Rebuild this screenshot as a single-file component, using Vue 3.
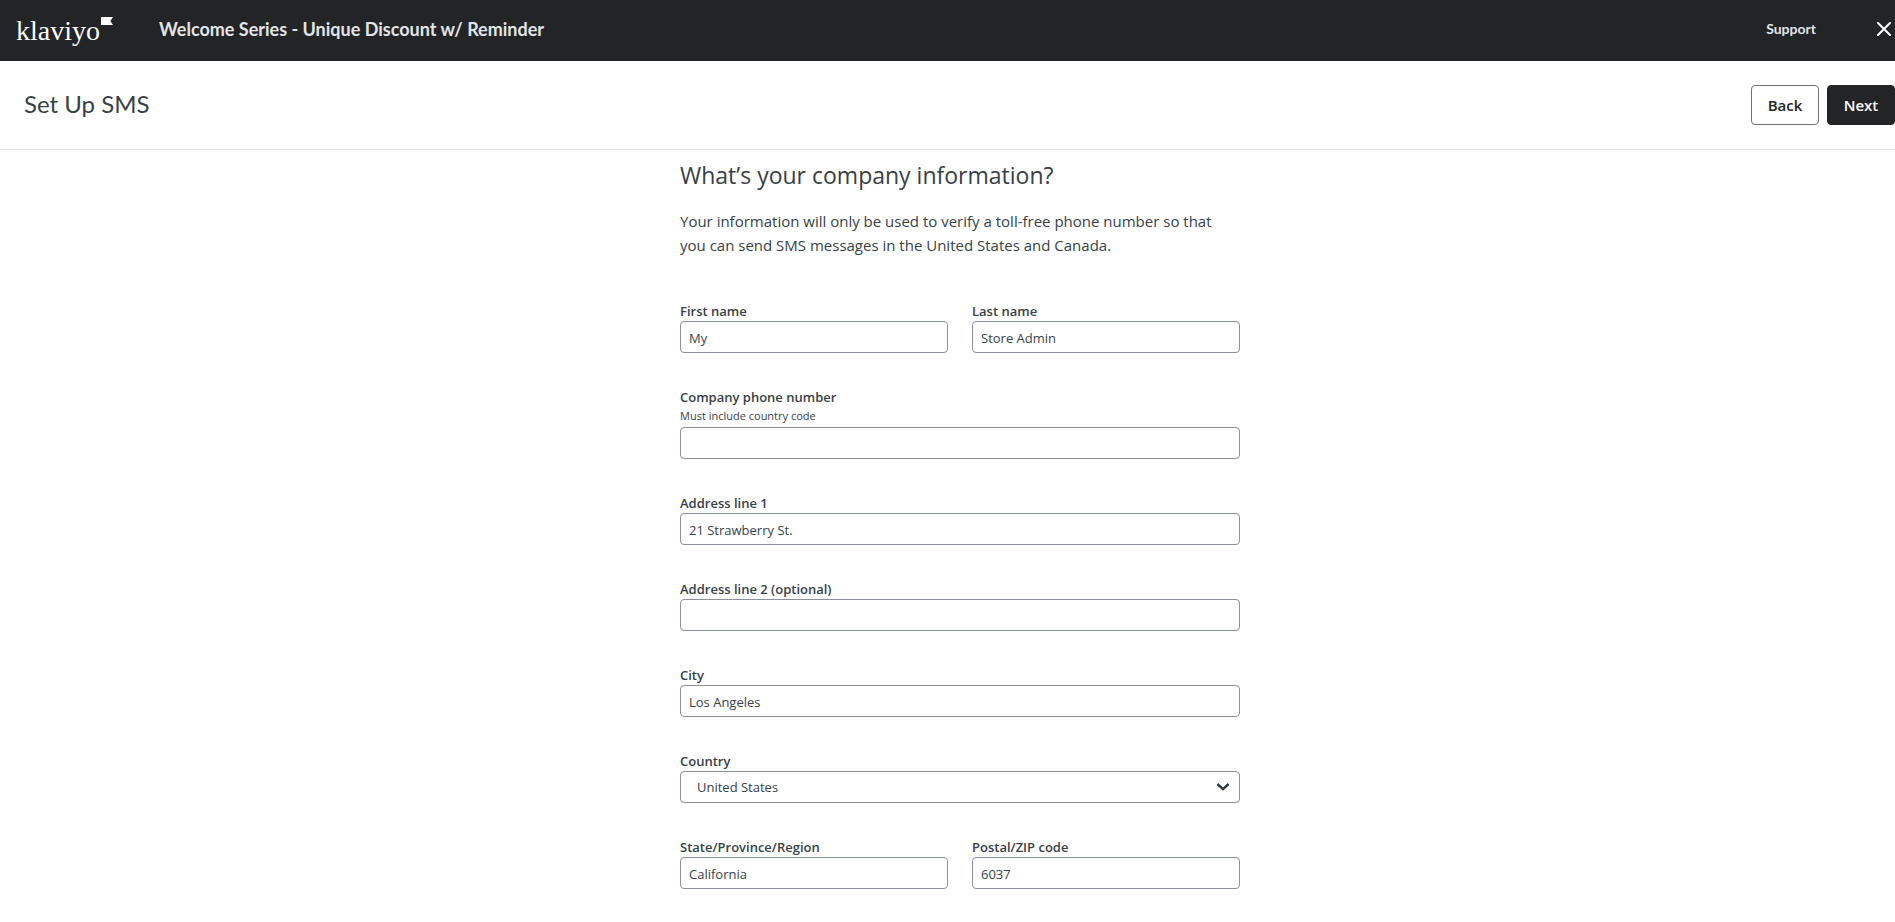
<script setup>
import { reactive } from 'vue'

const form = reactive({
  firstName: 'My',
  lastName: 'Store Admin',
  phone: '',
  address1: '21 Strawberry St.',
  address2: '',
  city: 'Los Angeles',
  country: 'United States',
  region: 'California',
  zip: '6037',
})
</script>

<template>
  <div class="page">
    <header class="topbar">
      <a class="logo" href="#" aria-label="klaviyo">
        <span class="logo-text">klaviyo</span>
        <svg class="logo-flag" viewBox="0 0 12 8" width="12" height="8" aria-hidden="true">
          <path d="M0 0H12L9.4 4L12 8H0Z" fill="#fff" />
        </svg>
      </a>
      <div class="flow-name">Welcome Series - Unique Discount w/ Reminder</div>
      <a class="support" href="#">Support</a>
      <button class="close" type="button" aria-label="Close">
        <svg viewBox="0 0 14 14" width="14" height="14" aria-hidden="true">
          <path d="M1 1L13 13M13 1L1 13" stroke="#fff" stroke-width="2" stroke-linecap="round" />
        </svg>
      </button>
    </header>

    <div class="stepbar">
      <h1>Set Up SMS</h1>
      <div class="actions">
        <button class="btn" type="button">Back</button>
        <button class="btn primary" type="submit" form="company">Next</button>
      </div>
    </div>

    <main>
      <form id="company" class="company" @submit.prevent>
        <h2>What’s your company information?</h2>
        <p class="intro">
          Your information will only be used to verify a toll-free phone number so that you can send SMS messages in the
          United States and Canada.
        </p>
        <div class="fields">
          <div class="row">
            <div class="field">
              <label for="first">First name</label>
              <input id="first" v-model="form.firstName" type="text" />
            </div>
            <div class="field">
              <label for="last">Last name</label>
              <input id="last" v-model="form.lastName" type="text" />
            </div>
          </div>
          <div class="field">
            <label for="phone">Company phone number</label>
            <span id="phone-hint" class="hint">Must include country code</span>
            <input id="phone" v-model="form.phone" type="tel" aria-describedby="phone-hint" />
          </div>
          <div class="field">
            <label for="address1">Address line 1</label>
            <input id="address1" v-model="form.address1" type="text" />
          </div>
          <div class="field">
            <label for="address2">Address line 2 (optional)</label>
            <input id="address2" v-model="form.address2" type="text" />
          </div>
          <div class="field">
            <label for="city">City</label>
            <input id="city" v-model="form.city" type="text" />
          </div>
          <div class="field">
            <label for="country">Country</label>
            <div class="select">
              <select id="country" v-model="form.country">
                <option>United States</option>
                <option>Canada</option>
              </select>
              <svg class="chevron" viewBox="0 0 14 10" width="14" height="10" aria-hidden="true">
                <path d="M1.4 2L7 7.2L12.6 2" fill="none" stroke="#2f3a44" stroke-width="2.4" />
              </svg>
            </div>
          </div>
          <div class="row">
            <div class="field">
              <label for="region">State/Province/Region</label>
              <input id="region" v-model="form.region" type="text" />
            </div>
            <div class="field">
              <label for="zip">Postal/ZIP code</label>
              <input id="zip" v-model="form.zip" type="text" />
            </div>
          </div>
        </div>
      </form>
    </main>
  </div>
</template>

<style>
body {
  margin: 0;
  background: #fff;
}
</style>

<style scoped>
.page {
  font-family: 'Open Sans', 'Noto Sans', sans-serif;
  color: #373f47;
}
.topbar {
  display: flex;
  align-items: center;
  height: 61px;
  padding-right: 4px;
  background: #232426;
}
.logo {
  position: relative;
  width: 143px;
  padding-left: 16px;
  color: #fff;
  text-decoration: none;
}
.logo-text {
  font: 28px/32px 'Liberation Serif', serif;
}
.logo-flag {
  position: absolute;
  left: 101px;
  top: 2px;
}
.flow-name {
  flex: 1;
  padding-bottom: 4px;
  font: 700 18px/24px Lato, sans-serif;
  color: #e1e5e8;
}
.support {
  margin-right: 61px;
  padding-bottom: 4px;
  font: 700 14px/20px Lato, sans-serif;
  color: #e1e5e8;
  text-decoration: none;
}
.close {
  display: flex;
  padding: 0 0 4px;
  border: 0;
  background: none;
}
.stepbar {
  display: flex;
  align-items: center;
  justify-content: space-between;
  height: 88px;
  padding-left: 24px;
  border-bottom: 1px solid #dfe1e3;
}
h1 {
  margin: 0;
  padding-bottom: 2px;
  font: 400 24px/32px Lato, sans-serif;
}
.actions {
  display: flex;
  gap: 8px;
}
.btn {
  width: 68px;
  height: 40px;
  padding: 0;
  border: 1px solid #6f7275;
  border-radius: 4px;
  background: #fff;
  color: #232426;
  font: 600 15px/20px 'Open Sans', sans-serif;
}
.btn.primary {
  border-color: #232426;
  background: #232426;
  color: #fff;
}
main {
  display: flex;
  justify-content: center;
  padding: 9px 0 33px 25px;
}
.company {
  width: 100%;
  max-width: 560px;
}
h2 {
  margin: 0 0 18px;
  font-size: 23px;
  font-weight: 400;
  line-height: 32px;
}
.intro {
  margin: 0 0 44px;
  font-size: 15px;
  line-height: 24px;
}
.fields {
  display: flex;
  flex-direction: column;
  gap: 34px;
}
.row {
  display: grid;
  grid-template-columns: 1fr 1fr;
  gap: 24px;
}
.field {
  display: flex;
  flex-direction: column;
  min-width: 0;
}
label {
  font-size: 13px;
  font-weight: 600;
  line-height: 20px;
}
.hint {
  margin-bottom: 2px;
  font-size: 11px;
  line-height: 18px;
}
input,
select {
  box-sizing: border-box;
  width: 100%;
  height: 32px;
  margin: 0;
  padding: 2px 8px 0;
  border: 1px solid #8b919b;
  border-radius: 4px;
  background: #fff;
  color: #373f47;
  font: 13px/20px 'Open Sans', sans-serif;
}
select {
  appearance: none;
  padding: 0 32px 0 16px;
}
.select {
  position: relative;
  display: flex;
}
.chevron {
  position: absolute;
  right: 10px;
  top: 11px;
  pointer-events: none;
}
</style>
